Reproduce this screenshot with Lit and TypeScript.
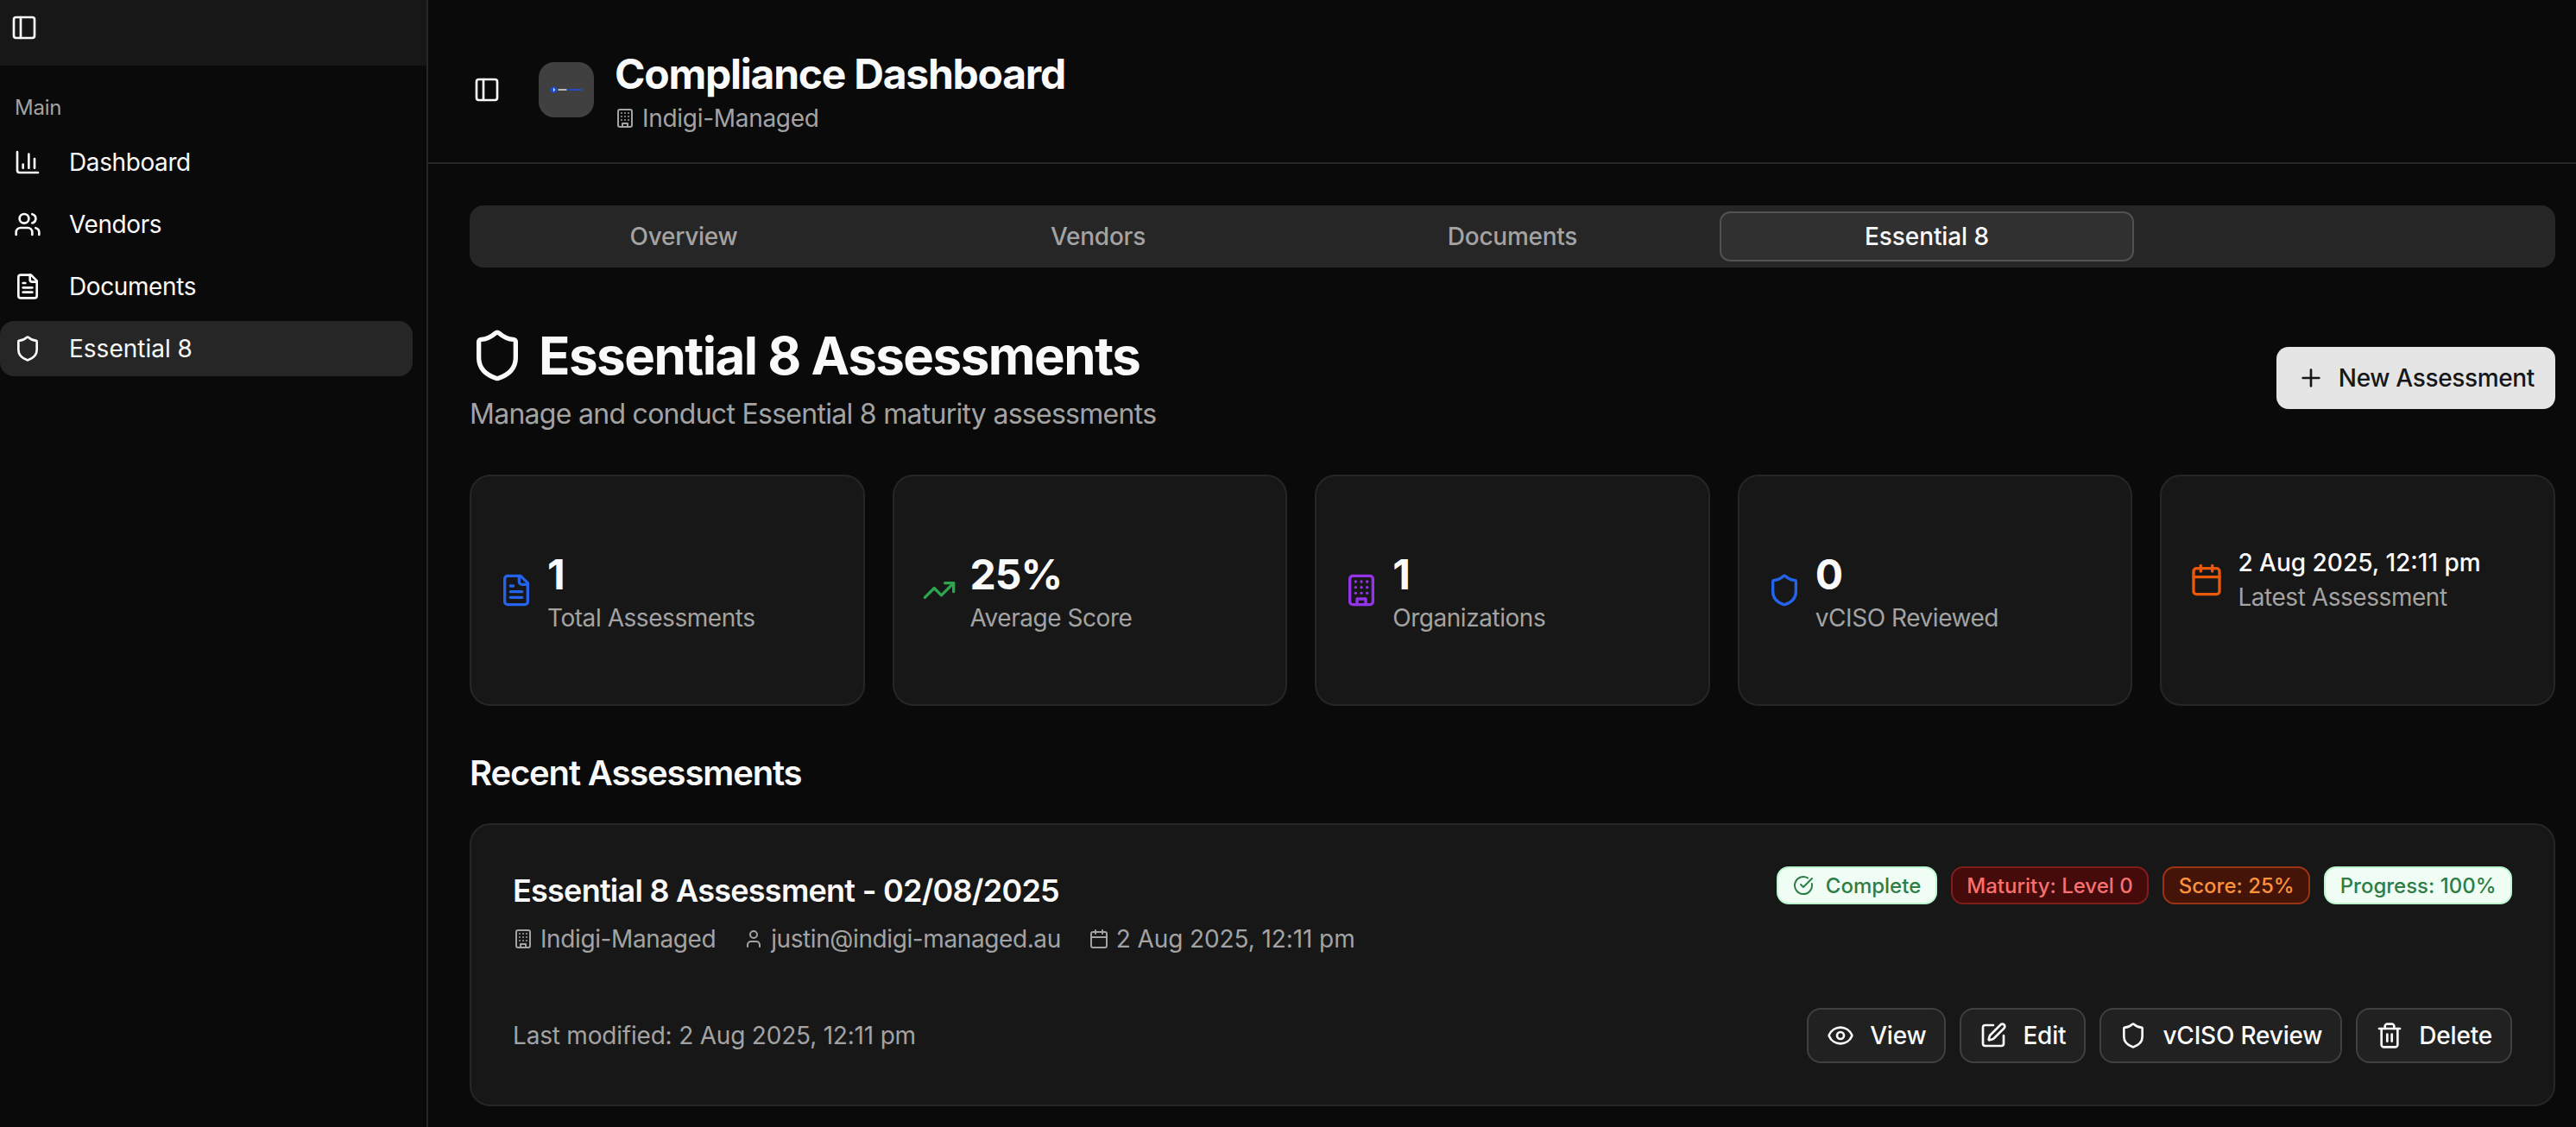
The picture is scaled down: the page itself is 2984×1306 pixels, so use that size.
import { LitElement, html, svg, css } from "lit";
import { customElement } from "lit/decorators.js";

const P: Record<string, any> = {
  panel: svg`<rect x="3" y="3" width="18" height="18" rx="2"/><path d="M9 3v18"/>`,
  chart: svg`<path d="M3 3v16a2 2 0 0 0 2 2h16"/><path d="M18 17V9"/><path d="M13 17V5"/><path d="M8 17v-3"/>`,
  users: svg`<path d="M16 21v-2a4 4 0 0 0-4-4H6a4 4 0 0 0-4 4v2"/><circle cx="9" cy="7" r="4"/><path d="M16 3.128a4 4 0 0 1 0 7.744"/><path d="M22 21v-2a4 4 0 0 0-3-3.87"/>`,
  file: svg`<path d="M15 2H6a2 2 0 0 0-2 2v16a2 2 0 0 0 2 2h12a2 2 0 0 0 2-2V7Z"/><path d="M14 2v4a2 2 0 0 0 2 2h4"/><path d="M10 9H8"/><path d="M16 13H8"/><path d="M16 17H8"/>`,
  shield: svg`<path d="M20 13c0 5-3.5 7.5-7.66 8.95a1 1 0 0 1-.67-.01C7.5 20.5 4 18 4 13V6a1 1 0 0 1 1-1c2 0 4.5-1.2 6.24-2.72a1.17 1.17 0 0 1 1.52 0C14.51 3.81 17 5 19 5a1 1 0 0 1 1 1z"/>`,
  trend: svg`<path d="M16 7h6v6"/><path d="m22 7-8.5 8.5-5-5L2 17"/>`,
  building: svg`<rect x="4" y="2" width="16" height="20" rx="2"/><path d="M9 22v-4h6v4"/><path d="M8 6h.01"/><path d="M16 6h.01"/><path d="M12 6h.01"/><path d="M12 10h.01"/><path d="M12 14h.01"/><path d="M16 10h.01"/><path d="M16 14h.01"/><path d="M8 10h.01"/><path d="M8 14h.01"/>`,
  calendar: svg`<path d="M8 2v4"/><path d="M16 2v4"/><rect x="3" y="4" width="18" height="18" rx="2"/><path d="M3 10h18"/>`,
  user: svg`<path d="M19 21v-2a4 4 0 0 0-4-4H9a4 4 0 0 0-4 4v2"/><circle cx="12" cy="7" r="4"/>`,
  check: svg`<path d="M21.801 10A10 10 0 1 1 17 3.335"/><path d="m9 11 3 3L22 4"/>`,
  eye: svg`<path d="M2.062 12.348a1 1 0 0 1 0-.696 10.75 10.75 0 0 1 19.876 0 1 1 0 0 1 0 .696 10.75 10.75 0 0 1-19.876 0"/><circle cx="12" cy="12" r="3"/>`,
  pen: svg`<path d="M12 3H5a2 2 0 0 0-2 2v14a2 2 0 0 0 2 2h14a2 2 0 0 0 2-2v-7"/><path d="M18.375 2.625a1 1 0 0 1 3 3l-9.013 9.014a2 2 0 0 1-.853.505l-2.873.84a.5.5 0 0 1-.62-.62l.84-2.873a2 2 0 0 1 .506-.852z"/>`,
  trash: svg`<path d="M3 6h18"/><path d="M19 6v14c0 1-1 2-2 2H7c-1 0-2-1-2-2V6"/><path d="M8 6V4c0-1 1-2 2-2h4c1 0 2 1 2 2v2"/><line x1="10" x2="10" y1="11" y2="17"/><line x1="14" x2="14" y1="11" y2="17"/>`,
  plus: svg`<path d="M5 12h14"/><path d="M12 5v14"/>`,
};

const icon = (name: string, cls = "i32") =>
  html`<svg class=${cls} viewBox="0 0 24 24" fill="none" stroke="currentColor" stroke-width="2" stroke-linecap="round" stroke-linejoin="round">${P[name]}</svg>`;

const NAV = [
  { n: "chart", t: "Dashboard" },
  { n: "users", t: "Vendors" },
  { n: "file", t: "Documents" },
  { n: "shield", t: "Essential 8", active: true },
];
const STATS = [
  { n: "file", c: "blue", v: "1", l: "Total Assessments" },
  { n: "trend", c: "green", v: "25%", l: "Average Score" },
  { n: "building", c: "purple", v: "1", l: "Organizations" },
  { n: "shield", c: "blue", v: "0", l: "vCISO Reviewed" },
  { n: "calendar", c: "orange", v: "2 Aug 2025, 12:11 pm", l: "Latest Assessment", small: true },
];

@customElement("app-root")
export class AppRoot extends LitElement {
  static styles = css`
    :host {
      display: block;
      height: 100vh;
      overflow: hidden;
      background: #0a0a0a;
      color: #fafafa;
      font-family: Inter, "Liberation Sans", sans-serif;
    }
    * { box-sizing: border-box; }
    svg { flex: none; display: block; }
    .i32 { width: 32px; height: 32px; }
    .i24 { width: 24px; height: 24px; }
    .i40 { width: 40px; height: 40px; }
    .i64 { width: 64px; height: 64px; }
    .shell { display: grid; grid-template-columns: 496px 1fr; height: 100%; }
    .side { border-right: 2px solid #262626; display: flex; flex-direction: column; }
    .side-top { height: 76px; background: #171717; padding: 16px 12px; }
    .group { font-size: 24px; line-height: 32px; color: #a3a3a3; padding: 33px 0 0 17px; margin-bottom: 15px; letter-spacing: -0.2px; }
    .nav { display: flex; flex-direction: column; gap: 8px; width: 478px; }
    .nav a { display: flex; align-items: center; gap: 32px; height: 64px; padding-left: 16px; border-radius: 16px; font-size: 28px; letter-spacing: -0.4px; }
    .nav a.on { background: #262626; letter-spacing: 0; }
    .main { min-width: 0; }
    .top { height: 190px; border-bottom: 2px solid #262626; display: flex; align-items: center; padding: 20px 0 0 52px; }
    .top .i32 { margin-right: 44px; }
    .tile { width: 64px; height: 64px; border-radius: 18px; background: #404040; display: flex; align-items: center; justify-content: center; margin-right: 24px; flex: none; }
    .tile svg { width: 38px; height: 10px; }
    .tblock { transform: translateY(2px); }
    .ttl { font-size: 48px; line-height: 62px; font-weight: 700; letter-spacing: -1.25px; }
    .sub { display: flex; align-items: center; gap: 8px; font-size: 28px; line-height: 40px; color: #a3a3a3; letter-spacing: -0.3px; }
    .content { padding: 48px 24px 0 48px; }
    .tabs { display: grid; grid-template-columns: repeat(5, 1fr); height: 72px; padding: 7px 8px; background: #262626; border-radius: 16px; }
    .tabs span { display: flex; align-items: center; justify-content: center; font-size: 28px; font-weight: 500; color: #a3a3a3; border: 2px solid transparent; border-radius: 12px; letter-spacing: -0.25px; }
    .tabs span.on { color: #fafafa; background: #303030; border-color: #525252; letter-spacing: -0.1px; }
    .hd { display: flex; align-items: flex-start; justify-content: space-between; margin-top: 66px; }
    .h1 { display: flex; align-items: center; gap: 16px; font-size: 60px; line-height: 72px; font-weight: 700; letter-spacing: -1.5px; }
    .desc { font-size: 32px; line-height: 48px; color: #a3a3a3; margin-top: 8px; letter-spacing: -0.72px; }
    .new { display: flex; align-items: center; gap: 16px; height: 72px; padding: 0 24px; margin-top: 26px; border-radius: 14px; background: #e5e5e5; color: #171717; font-size: 28px; font-weight: 500; letter-spacing: -0.35px; }
    .stats { display: grid; grid-template-columns: repeat(5, 1fr); gap: 32px; margin-top: 46px; }
    .stat { background: #171717; border: 2px solid #262626; border-radius: 24px; padding: 80px 32px; height: 268px; display: flex; gap: 16px; align-items: flex-start; }
    .stat .ic { align-self: flex-start; display: flex; align-items: center; }
    .stat.big .ic { height: 104px; }
    .stat.sm .ic { height: 80px; }
    .val { font-size: 48px; line-height: 64px; font-weight: 700; margin: 2px 0 -2px; letter-spacing: -1px; }
    .val.small { font-size: 28px; line-height: 40px; font-weight: 500; margin: 0; letter-spacing: 0; }
    .lbl { font-size: 28px; line-height: 40px; color: #a3a3a3; letter-spacing: -0.45px; }
    .blue { color: #2563eb; } .green { color: #2da44e; } .purple { color: #9333ea; } .orange { color: #ea580c; }
    h2 { margin: 50px 0 30px; font-size: 40px; line-height: 56px; font-weight: 600; letter-spacing: -1.15px; }
    .card { background: #171717; border: 2px solid #262626; border-radius: 24px; padding: 48px; height: 328px; display: flex; flex-direction: column; }
    .row1 { display: flex; justify-content: space-between; align-items: flex-start; }
    .ct { font-size: 36px; line-height: 56px; font-weight: 600; letter-spacing: -0.75px; }
    .meta { display: flex; gap: 32px; margin-top: 8px; font-size: 28px; line-height: 40px; color: #a3a3a3; letter-spacing: -0.4px; }
    .meta span { display: flex; align-items: center; gap: 8px; }
    .meta span.when { letter-spacing: -0.1px; }
    .badges { display: flex; gap: 16px; }
    .b { display: flex; align-items: center; gap: 14px; height: 44px; padding: 0 16.5px; border: 2px solid; border-radius: 14px; font-size: 24px; font-weight: 500; }
    .b.g { background: #f0fdf4; border-color: #bbf7d0; color: #2e7d46; }
    .b.r { background: #450a0a; border-color: #7f1d1d; color: #f87171; }
    .b.o { background: #431407; border-color: #9a3412; color: #fb923c; }
    .row2 { display: flex; justify-content: space-between; align-items: center; margin-top: 60px; }
    .mod { font-size: 28px; color: #a3a3a3; letter-spacing: -0.2px; }
    .acts { display: flex; gap: 16px; }
    .btn { display: flex; align-items: center; gap: 18px; height: 64px; padding: 0 21px; background: #212121; border: 2px solid #404040; border-radius: 16px; font-size: 28px; font-weight: 500; letter-spacing: -0.2px; }
  `;

  render() {
    return html`<div class="shell">
      <aside class="side">
        <div class="side-top">${icon("panel")}</div>
        <div class="group">Main</div>
        <nav class="nav">
          ${NAV.map((x) => html`<a class=${x.active ? "on" : ""}>${icon(x.n)}${x.t}</a>`)}
        </nav>
      </aside>
      <div class="main">
        <header class="top">
          ${icon("panel")}
          <div class="tile">
            <svg viewBox="0 0 38 10"><circle cx="4.5" cy="5" r="3.5" fill="#1d4ed8"/><path d="M4 2.5 6 5 4 7.5Z" fill="#e5e7eb"/><rect x="9.5" y="4" width="10" height="2" fill="#d4d4d4" opacity=".8"/><rect x="20.5" y="4" width="17" height="2" fill="#1d4ed8" opacity=".85"/></svg>
          </div>
          <div class="tblock">
            <div class="ttl">Compliance Dashboard</div>
            <div class="sub">${icon("building", "i24")}Indigi-Managed</div>
          </div>
        </header>
        <div class="content">
          <div class="tabs">
            <span>Overview</span><span>Vendors</span><span>Documents</span><span class="on">Essential 8</span>
          </div>
          <div class="hd">
            <div>
              <div class="h1">${icon("shield", "i64")}Essential 8 Assessments</div>
              <div class="desc">Manage and conduct Essential 8 maturity assessments</div>
            </div>
            <div class="new">${icon("plus")}New Assessment</div>
          </div>
          <div class="stats">
            ${STATS.map((s) => html`<div class="stat ${s.small ? "sm" : "big"}">
              <div class="ic ${s.c}">${icon(s.n, "i40")}</div>
              <div>
                <div class="val ${s.small ? "small" : ""}">${s.v}</div>
                <div class="lbl">${s.l}</div>
              </div>
            </div>`)}
          </div>
          <h2>Recent Assessments</h2>
          <div class="card">
            <div class="row1">
              <div>
                <div class="ct">Essential 8 Assessment - 02/08/2025</div>
                <div class="meta">
                  <span>${icon("building", "i24")}Indigi-Managed</span>
                  <span>${icon("user", "i24")}justin@indigi-managed.au</span>
                  <span class="when">${icon("calendar", "i24")}2 Aug 2025, 12:11 pm</span>
                </div>
              </div>
              <div class="badges">
                <div class="b g">${icon("check", "i24")}Complete</div>
                <div class="b r">Maturity: Level 0</div>
                <div class="b o">Score: 25%</div>
                <div class="b g">Progress: 100%</div>
              </div>
            </div>
            <div class="row2">
              <div class="mod">Last modified: 2 Aug 2025, 12:11 pm</div>
              <div class="acts">
                <div class="btn">${icon("eye")}View</div>
                <div class="btn">${icon("pen")}Edit</div>
                <div class="btn">${icon("shield")}vCISO Review</div>
                <div class="btn">${icon("trash")}Delete</div>
              </div>
            </div>
          </div>
        </div>
      </div>
    </div>`;
  }
}
